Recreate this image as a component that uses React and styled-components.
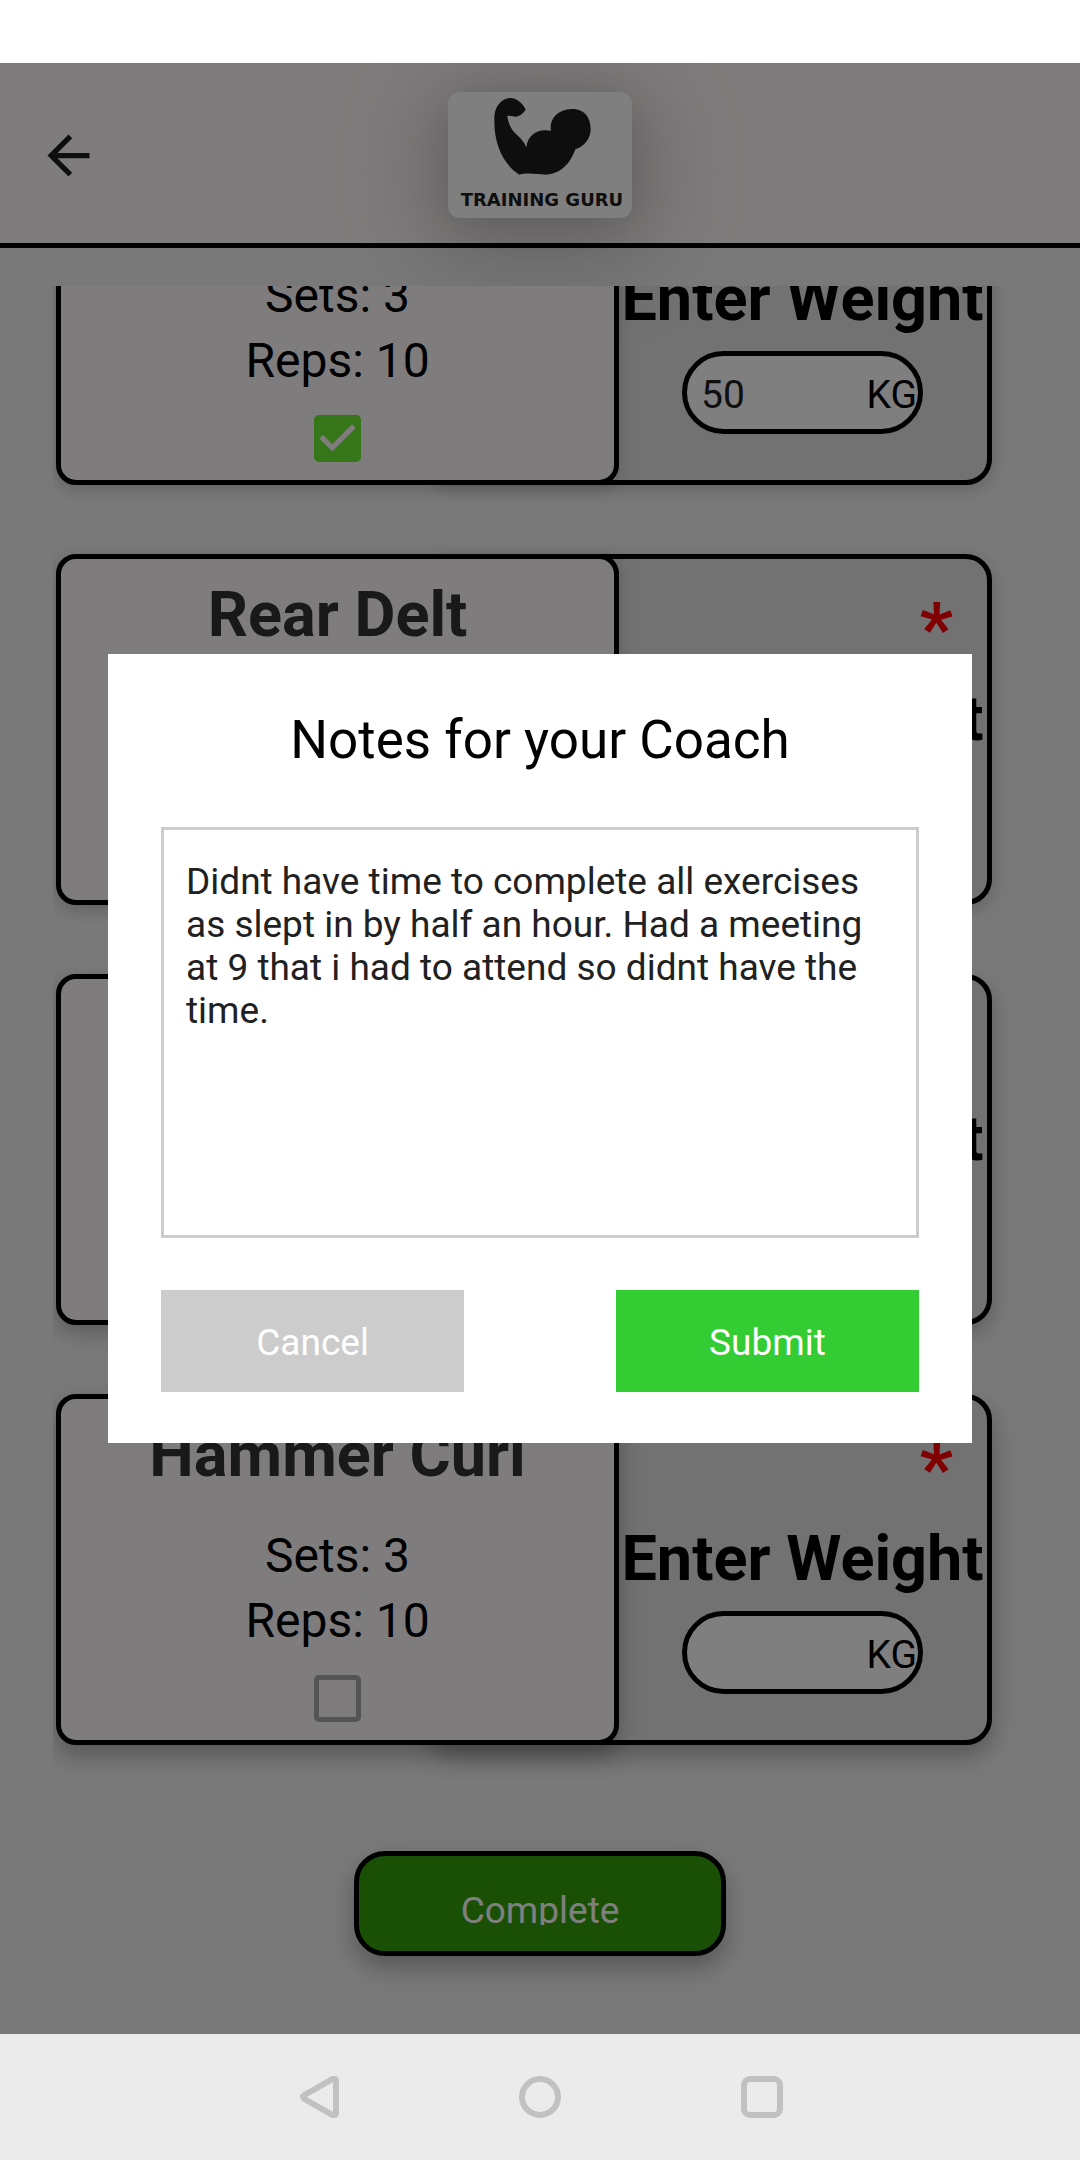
import React, { useState } from "react";
import styled, { createGlobalStyle } from "styled-components";

const GlobalStyle = createGlobalStyle`
  *, *::before, *::after { box-sizing: border-box; }
  body {
    margin: 0;
    background: #ffffff;
    font-family: Roboto, "Liberation Sans", sans-serif;
    color: #000000;
  }
  button, input, textarea { font-family: inherit; margin: 0; }
  h1, h2, p { margin: 0; font-weight: 400; }
`;

const Device = styled.div`
  display: flex;
  flex-direction: column;
  height: 100vh;
`;

const StatusBar = styled.div`
  flex: none;
  height: 63px;
  background: #ffffff;
`;

const Screen = styled.div`
  position: relative;
  flex: 1;
  min-height: 0;
  display: flex;
  flex-direction: column;
  gap: 38px;
  overflow: hidden;
  background: #f2f2f2;
`;

const Header = styled.header`
  position: relative;
  z-index: 1;
  flex: none;
  display: grid;
  grid-template-columns: 1fr auto 1fr;
  align-items: center;
  padding: 29px 37px 25px;
  background: #fff9fa;
  border-bottom: 5px solid #000000;
`;

const IconButton = styled.button`
  display: flex;
  justify-self: start;
  padding: 0;
  border: 0;
  background: none;
  color: ${(p) => p.$color};
`;

const Logo = styled.div`
  display: flex;
  flex-direction: column;
  align-items: center;
  width: 184px;
  height: 126px;
  border-radius: 12px;
  background: #ffffff;
  box-shadow: 0 8px 40px rgba(0, 0, 0, 0.1), 0 16px 100px 20px rgba(0, 0, 0, 0.2);
`;

const LogoName = styled.span`
  padding-left: 4px;
  font-family: "DejaVu Sans", sans-serif;
  font-size: 18px;
  font-weight: 700;
  line-height: 21px;
  white-space: nowrap;
  color: #1c1c1c;
`;

const Scroller = styled.main`
  flex: 1;
  min-height: 0;
  display: flex;
  flex-direction: column-reverse;
  margin-left: 53px;
  overflow-x: hidden;
  overflow-y: auto;
  scrollbar-width: none;
`;

const ExerciseList = styled.div`
  flex: none;
  display: flex;
  flex-direction: column;
  gap: 69px;
  padding: 69px 88px 69px 3px;
`;

const Card = styled.section`
  display: grid;
  grid-template-columns: minmax(0, 151fr) minmax(0, 100fr);
`;

const Panel = styled.div`
  display: flex;
  flex-direction: column;
  align-items: center;
  border: 5px solid #000000;
  box-shadow: 0 ${(p) => p.$depth}px ${(p) => p.$depth + 12}px
    rgba(0, 0, 0, ${(p) => 0.14 + p.$depth / 80});
`;

const ExercisePanel = styled(Panel)`
  position: relative;
  z-index: 1;
  padding: 19px 0 18px;
  border-radius: 20px;
  background: #fff9fa;
`;

const WeightPanel = styled(Panel)`
  margin-left: -192px;
  padding: 19px 0 0 186px;
  border-radius: 26px;
  background: #e4e4e4;
`;

const ExerciseName = styled.h2`
  margin-bottom: 31px;
  font-size: 63px;
  font-weight: 700;
  line-height: 74px;
  color: #333333;
`;

const Detail = styled.p`
  font-size: 48px;
  line-height: 65px;
`;

const CheckLabel = styled.label`
  display: grid;
  margin-top: 22px;

  & > * { grid-area: 1 / 1; }
  & > svg { pointer-events: none; }
`;

const CheckInput = styled.input`
  appearance: none;
  width: 47px;
  height: 47px;
  border: 5px solid #a8a8a8;
  border-radius: 5px;

  &:checked {
    border-color: #6eea32;
    background: #6eea32;
  }
  &:not(:checked) + svg { display: none; }
`;

const Required = styled.span`
  align-self: flex-end;
  margin: 14px 0 16px;
  padding-right: 34px;
  font-size: 73px;
  font-weight: 700;
  line-height: 74px;
  color: #ff0000;
`;

const WeightTitle = styled.label`
  margin-bottom: 15px;
  font-size: 63px;
  font-weight: 700;
  line-height: 74px;
  white-space: nowrap;
`;

const WeightField = styled.div`
  display: flex;
  align-items: center;
  width: 241px;
  height: 83px;
  padding: 5px 1px 0 14px;
  border: 5px solid #000000;
  border-radius: 42px;
  background: #ffffff;
  font-size: 39px;
`;

const WeightInput = styled.input`
  flex: 1;
  min-width: 0;
  padding: 0;
  border: 0;
  outline: 0;
  background: transparent;
  font-size: 39px;
  color: #212121;
`;

const Footer = styled.footer`
  flex: none;
  display: flex;
  justify-content: center;
  margin-top: -38px;
  padding: 37px 0 78px;
`;

const CompleteButton = styled.button`
  display: flex;
  justify-content: center;
  width: 372px;
  height: 105px;
  padding: 33px 0 0;
  border: 5px solid #000000;
  border-radius: 31px;
  background: #32a00a;
  box-shadow: 0 12px 24px rgba(0, 0, 0, 0.28);
  color: #ffffff;
`;

const ClippedText = styled.span`
  height: 36px;
  overflow: hidden;
  font-size: 37px;
  line-height: 43px;
`;

const Backdrop = styled.div`
  position: absolute;
  inset: 0;
  z-index: 2;
  display: flex;
  align-items: center;
  justify-content: center;
  background: rgba(0, 0, 0, 0.5);
`;

const Dialog = styled.form`
  display: flex;
  flex-direction: column;
  gap: 52px;
  width: 80%;
  padding: 52px 53px 51px;
  background: #ffffff;
`;

const DialogTitle = styled.label`
  font-size: 53px;
  line-height: 69px;
  text-align: center;
`;

const Notes = styled.textarea`
  display: block;
  width: 100%;
  height: 411px;
  padding: 30px 22px;
  border: 3px solid #cccccc;
  outline: 0;
  resize: none;
  background: #ffffff;
  font-size: 37px;
  line-height: 43px;
  color: #212121;
`;

const Actions = styled.div`
  display: flex;
  justify-content: space-between;
`;

const ActionButton = styled.button`
  width: 40%;
  height: 102px;
  padding: 2px 0 0;
  border: 0;
  background: ${(p) => (p.$primary ? "#33cc33" : "#cccccc")};
  font-size: 37px;
  line-height: 43px;
  color: #ffffff;
`;

const NavBar = styled.nav`
  flex: none;
  display: flex;
  align-items: center;
  justify-content: center;
  gap: 180px;
  height: 126px;
  background: #ebebeb;
`;

const exercises = [
  { id: "lateral", name: "Lateral Raise", done: true, weight: "50", depth: 4 },
  { id: "rear", name: "Rear Delt", done: false, weight: "", depth: 5 },
  { id: "bicep", name: "Bicep Curl", done: false, weight: "", depth: 8 },
  { id: "hammer", name: "Hammer Curl", done: false, weight: "", depth: 11 },
];

function ExerciseCard({ id, name, done, weight, depth }) {
  return (
    <Card>
      <ExercisePanel $depth={depth}>
        <ExerciseName>{name}</ExerciseName>
        <Detail>Sets: 3</Detail>
        <Detail>Reps: 10</Detail>
        <CheckLabel>
          <CheckInput type="checkbox" defaultChecked={done} aria-label={`${name} done`} />
          <svg width="47" height="47" viewBox="3 3 18 18" aria-hidden="true">
            <path fill="#fff9fa" d="M10 17l-5-5 1.41-1.41L10 14.17l7.59-7.59L19 8l-9 9z" />
          </svg>
        </CheckLabel>
      </ExercisePanel>
      <WeightPanel $depth={depth}>
        <Required>*</Required>
        <WeightTitle htmlFor={id}>Enter Weight</WeightTitle>
        <WeightField>
          <WeightInput id={id} inputMode="decimal" defaultValue={weight} />
          <span>KG</span>
        </WeightField>
      </WeightPanel>
    </Card>
  );
}

export default function App() {
  const [notes, setNotes] = useState(
    "Didnt have time to complete all exercises as slept in by half an hour. Had a meeting at 9 that i had to attend so didnt have the time."
  );

  return (
    <Device>
      <GlobalStyle />
      <StatusBar />
      <Screen>
        <Header>
          <IconButton type="button" aria-label="Back" $color="#1c1c1c">
            <svg width="63" height="63" viewBox="0 0 24 24" fill="currentColor">
              <path d="M20 11H7.83l5.59-5.59L12 4l-8 8 8 8 1.41-1.41L7.83 13H20v-2z" />
            </svg>
          </IconButton>
          <Logo>
            <svg width="184" height="97" viewBox="84 66 552 291" aria-hidden="true">
              <path
                fill="#1c1c1c"
                d="M223 150C221 112 243 85 270 84C290 83 310 101 317 119C309 131 298 139 288 140C280 141 275 135 262 138C264 156 272 176 285 189C300 203 315 218 319 233C322 200 345 180 378 181L393 182C387 150 410 118 455 117C495 116 512 145 512 178C512 205 494 230 466 238C455 270 430 311 378 314C352 313 322 307 298 314C252 285 222 225 223 150Z"
              />
            </svg>
            <LogoName>TRAINING GURU</LogoName>
          </Logo>
        </Header>

        <Scroller>
          <ExerciseList>
            {exercises.map((exercise) => (
              <ExerciseCard key={exercise.id} {...exercise} />
            ))}
          </ExerciseList>
        </Scroller>

        <Footer>
          <CompleteButton type="button">
            <ClippedText>Complete</ClippedText>
          </CompleteButton>
        </Footer>

        <Backdrop>
          <Dialog role="dialog" aria-modal="true" onSubmit={(e) => e.preventDefault()}>
            <DialogTitle htmlFor="notes">Notes for your Coach</DialogTitle>
            <Notes
              id="notes"
              spellCheck={false}
              value={notes}
              onChange={(e) => setNotes(e.target.value)}
            />
            <Actions>
              <ActionButton type="button">Cancel</ActionButton>
              <ActionButton type="submit" $primary>
                Submit
              </ActionButton>
            </Actions>
          </Dialog>
        </Backdrop>
      </Screen>

      <NavBar>
        <IconButton type="button" aria-label="Back" $color="#c1c1c1">
          <svg width="42" height="42" viewBox="0 0 42 42" fill="none" stroke="currentColor">
            <path
              d="M34.800 3.300Q39 1.500 39 5.500V36.500Q39 40.500 34.800 38.700L7.500 23Q4.500 21 7.500 19Z"
              strokeWidth="6"
              strokeLinejoin="round"
            />
          </svg>
        </IconButton>
        <IconButton type="button" aria-label="Home" $color="#c1c1c1">
          <svg width="42" height="42" viewBox="0 0 42 42" fill="none" stroke="currentColor">
            <circle cx="21" cy="21" r="18" strokeWidth="6" />
          </svg>
        </IconButton>
        <IconButton type="button" aria-label="Recent apps" $color="#c1c1c1">
          <svg width="42" height="42" viewBox="0 0 42 42" fill="none" stroke="currentColor">
            <rect x="3" y="3" width="36" height="36" rx="6" strokeWidth="6" />
          </svg>
        </IconButton>
      </NavBar>
    </Device>
  );
}
